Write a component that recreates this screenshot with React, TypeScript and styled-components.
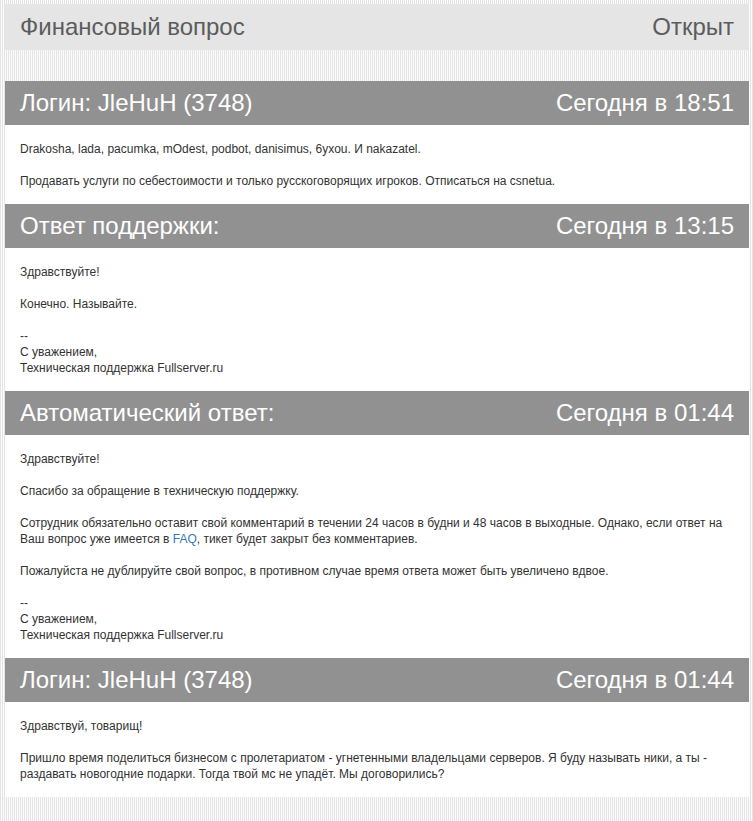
import React from 'react';
import styled, { createGlobalStyle } from 'styled-components';

const GlobalStyle = createGlobalStyle`
    html, body {
        margin: 0;
        padding: 0;
    }
    body {
        font-family: 'Liberation Sans', Arial, sans-serif;
        background: repeating-linear-gradient(90deg, #e4e4e4 0 1px, #fcfcfc 1px 2px);
    }
`;

const Page = styled.div`
    min-height: 100vh;
    box-sizing: border-box;
    padding: 4px 4px 0 5px;
`;

const TitleBar = styled.div`
    height: 46px;
    display: flex;
    align-items: center;
    justify-content: space-between;
    padding: 0 15px;
    background: #e5e5e5;
    color: #5c5c5c;
    font-size: 24px;
`;

const Thread = styled.div`
    margin-top: 31px;
    background: #fff;
`;

const Header = styled.div`
    height: 44px;
    display: flex;
    align-items: center;
    justify-content: space-between;
    padding: 0 15px;
    background: #919191;
    color: #fff;
    font-size: 24px;
`;

const Body = styled.div`
    padding: 16px 15px 15px;
    font-size: 12px;
    line-height: 16px;
    color: #333;
`;

const Link = styled.a`
    color: #337ab7;
    text-decoration: none;
`;

type Msg = {
    author: string;
    time: string;
    text: React.ReactNode;
};

const signature = (
    <>
        --<br />
        С уважением,<br />
        Техническая поддержка Fullserver.ru
    </>
);

const messages: Msg[] = [
    {
        author: 'Логин: JleHuH (3748)',
        time: 'Сегодня в 18:51',
        text: (
            <>
                Drakosha, lada, pacumka, mOdest, podbot, danisimus, 6yxou. И nakazatel.<br /><br />
                Продавать услуги по себестоимости и только русскоговорящих игроков. Отписаться на csnetua.
            </>
        ),
    },
    {
        author: 'Ответ поддержки:',
        time: 'Сегодня в 13:15',
        text: (
            <>
                Здравствуйте!<br /><br />
                Конечно. Называйте.<br /><br />
                {signature}
            </>
        ),
    },
    {
        author: 'Автоматический ответ:',
        time: 'Сегодня в 01:44',
        text: (
            <>
                Здравствуйте!<br /><br />
                Спасибо за обращение в техническую поддержку.<br /><br />
                Сотрудник обязательно оставит свой комментарий в течении 24 часов в будни и 48 часов в выходные. Однако, если ответ на Ваш вопрос уже имеется в <Link href="#">FAQ</Link>, тикет будет закрыт без комментариев.<br /><br />
                Пожалуйста не дублируйте свой вопрос, в противном случае время ответа может быть увеличено вдвое.<br /><br />
                {signature}
            </>
        ),
    },
    {
        author: 'Логин: JleHuH (3748)',
        time: 'Сегодня в 01:44',
        text: (
            <>
                Здравствуй, товарищ!<br /><br />
                Пришло время поделиться бизнесом с пролетариатом - угнетенными владельцами серверов. Я буду называть ники, а ты - раздавать новогодние подарки. Тогда твой мс не упадёт. Мы договорились?
            </>
        ),
    },
];

const App = () => {
    return (
        <Page>
            <GlobalStyle />
            <TitleBar>
                <span>Финансовый вопрос</span>
                <span>Открыт</span>
            </TitleBar>
            <Thread>
                { messages.map((m, key) => (
                    <div key={ key }>
                        <Header>
                            <span>{ m.author }</span>
                            <span>{ m.time }</span>
                        </Header>
                        <Body>{ m.text }</Body>
                    </div>
                )) }
            </Thread>
        </Page>
    );
};

export default App;
